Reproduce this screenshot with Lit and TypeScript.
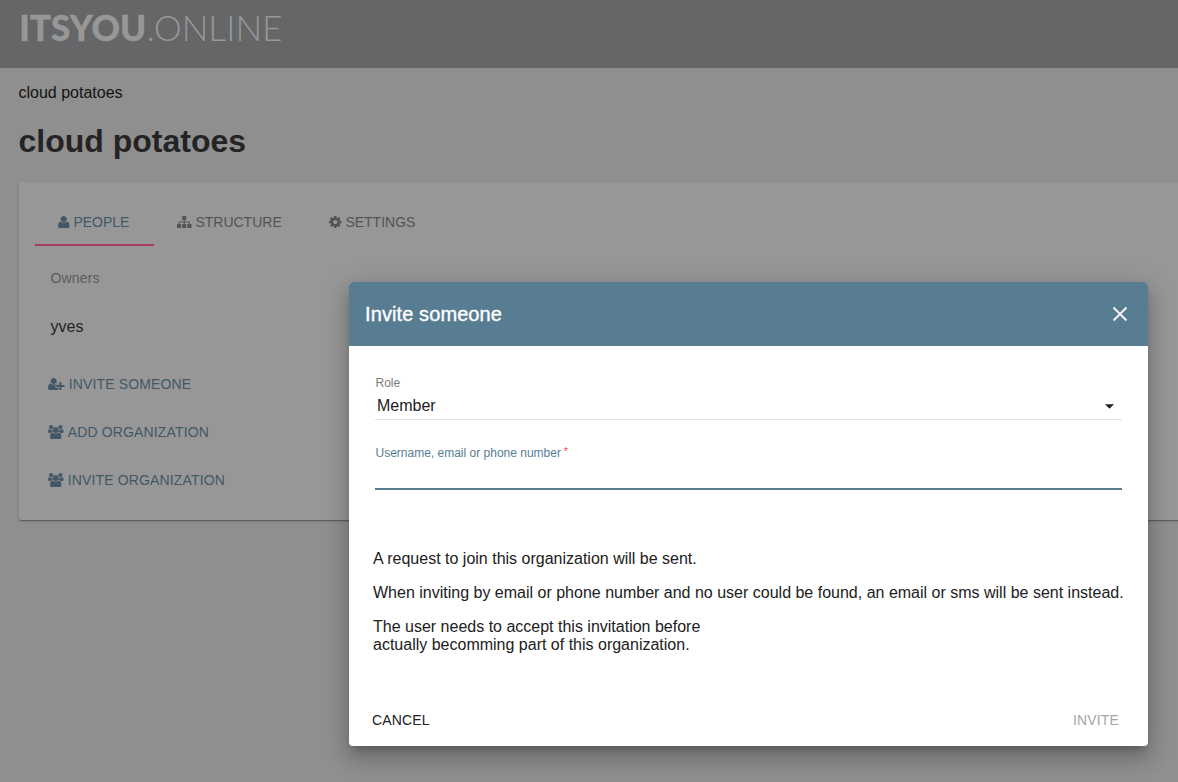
import { LitElement, html, css, svg } from "lit";
import { customElement, property } from "lit/decorators.js";

const USER_HEAD = "q0 159-112.5 271.5t-271.5 112.5-271.5-112.5-112.5-271.5 112.5-271.5 271.5-112.5 271.5 112.5 112.5 271.5z";

const ICONS: Record<string, { x: number; w: number; d: string }> = {
  user: {
    x: 192,
    w: 1408,
    d: "M1600 1405q0 120-73 189.5t-194 69.5h-874q-121 0-194-69.5t-73-189.5q0-53 3.5-103.5t14-109 26.5-108.5 43-97.5 62-81 85.5-53.5 111.5-20q9 0 42 21.5t74.5 48 108 48 133.5 21.5 133.5-21.5 108-48 74.5-48 42-21.5q61 0 111.5 20t85.5 53.5 62 81 43 97.5 26.5 108.5 14 109 3.5 103.5zm-320-893" + USER_HEAD,
  },
  sitemap: {
    x: 0,
    w: 1792,
    d: "M1792 1248v320q0 40-28 68t-68 28h-320q-40 0-68-28t-28-68v-320q0-40 28-68t68-28h96v-192h-512v192h96q40 0 68 28t28 68v320q0 40-28 68t-68 28h-320q-40 0-68-28t-28-68v-320q0-40 28-68t68-28h96v-192h-512v192h96q40 0 68 28t28 68v320q0 40-28 68t-68 28h-320q-40 0-68-28t-28-68v-320q0-40 28-68t68-28h96v-192q0-52 38-90t90-38h512v-192h-96q-40 0-68-28t-28-68v-320q0-40 28-68t68-28h320q40 0 68 28t28 68v320q0 40-28 68t-68 28h-96v192h512q52 0 90 38t38 90v192h96q40 0 68 28t28 68z",
  },
  cog: {
    x: 128,
    w: 1536,
    d: "M1152 896q0-106-75-181t-181-75-181 75-75 181 75 181 181 75 181-75 75-181zm512-109v222q0 12-8 23t-20 13l-185 28q-19 54-39 91 35 50 107 138 10 12 10 25t-9 23q-27 37-99 108t-94 71q-12 0-26-9l-138-108q-44 23-91 38-16 136-29 186-7 28-36 28h-222q-14 0-24.5-8.5t-11.5-21.5l-28-184q-49-16-90-37l-141 107q-10 9-25 9-14 0-25-11-126-114-165-168-7-10-7-23 0-12 8-23 15-21 51-66.5t54-70.5q-27-50-41-99l-183-27q-13-2-21-12.5t-8-23.5v-222q0-12 8-23t19-13l186-28q14-46 39-92-40-57-107-138-10-12-10-24 0-10 9-23 26-36 98.5-107.5t94.5-71.5q13 0 26 10l138 107q44-23 91-38 16-136 29-186 7-28 36-28h222q14 0 24.5 8.5t11.5 21.5l28 184q49 16 90 37l142-107q9-9 24-9 13 0 25 10 129 119 165 170 7 8 7 22 0 12-8 23-15 21-51 66.5t-54 70.5q26 50 41 98l183 28q13 2 21 12.5t8 23.5z",
  },
  userPlus: {
    x: 0,
    w: 2048,
    d: "M704 896q-159 0-271.5-112.5t-112.5-271.5 112.5-271.5 271.5-112.5 271.5 112.5 112.5 271.5-112.5 271.5-271.5 112.5zm960 128h352q13 0 22.5 9.5t9.5 22.5v192q0 13-9.5 22.5t-22.5 9.5h-352v352q0 13-9.5 22.5t-22.5 9.5h-192q-13 0-22.5-9.5t-9.5-22.5v-352h-352q-13 0-22.5-9.5t-9.5-22.5v-192q0-13 9.5-22.5t22.5-9.5h352v-352q0-13 9.5-22.5t22.5-9.5h192q13 0 22.5 9.5t9.5 22.5v352zm-736 224q0 52 38 90t90 38h256v238q-68 50-171 50h-874q-121 0-194-69t-73-190q0-53 3.5-103.5t14-109 26.5-108.5 43-97.5 62-81 85.5-53.5 111.5-20q19 0 39 17 79 61 154.5 91.5t164.5 30.5 164.5-30.5 154.5-91.5q20-17 39-17 132 0 217 96h-223q-52 0-90 38t-38 90v192z",
  },
  users: {
    x: 0,
    w: 1920,
    d: "M593 896q-162 5-265 128h-134q-82 0-138-40.5t-56-118.5q0-353 124-353 6 0 43.5 21t97.5 42.5 119 21.5q67 0 133-23-5 37-5 66 0 139 81 256zm1071 637q0 120-73 189.5t-194 69.5h-874q-121 0-194-69.5t-73-189.5q0-53 3.5-103.5t14-109 26.5-108.5 43-97.5 62-81 85.5-53.5 111.5-20q10 0 43 21.5t73 48 107 48 135 21.5 135-21.5 107-48 73-48 43-21.5q61 0 111.5 20t85.5 53.5 62 81 43 97.5 26.5 108.5 14 109 3.5 103.5zm-1024-1277q0 106-75 181t-181 75-181-75-75-181 75-181 181-75 181 75 75 181zm704 384" + USER_HEAD + "m576 225q0 78-56 118.5t-138 40.5h-134q-103-123-265-128 81-117 81-256 0-29-5-66 66 23 133 23 59 0 119-21.5t97.5-42.5 43.5-21q124 0 124 353zm-128-609q0 106-75 181t-181 75-181-75-75-181 75-181 181-75 181 75 75 181z",
  },
};

@customElement("fa-icon")
class FaIcon extends LitElement {
  @property() name = "user";
  static styles = css`
    :host { display: inline-flex; flex: none; }
    .glyph { display: block; height: 14px; fill: currentColor; }
  `;
  render() {
    const i = ICONS[this.name];
    return html`<svg class="glyph" width=${i.w / 128 + 0.5} viewBox="${i.x} 0 ${i.w} 1792" preserveAspectRatio="none">${svg`<path d=${i.d}></path>`}</svg>`;
  }
}

@customElement("invite-dialog")
class InviteDialog extends LitElement {
  static styles = css`
    :host {
      display: flex;
      flex-direction: column;
      box-sizing: border-box;
      width: 799px;
      height: 464px;
      background: #fff;
      border-radius: 4px;
      overflow: hidden;
      color: #212121;
      box-shadow: 0 7px 8px -4px rgba(0, 0, 0, 0.2), 0 13px 19px 2px rgba(0, 0, 0, 0.14), 0 5px 24px 4px rgba(0, 0, 0, 0.12);
    }
    .bar {
      display: flex;
      align-items: center;
      justify-content: space-between;
      height: 64px;
      padding: 0 20px 0 16px;
      background: #587d93;
      color: #fff;
      flex: none;
    }
    .title { margin: 0; font-size: 20px; font-weight: 400; letter-spacing: 0.1px; -webkit-text-stroke: 0.35px #fff; }
    .close { display: block; width: 16px; height: 16px; }
    .form { display: flex; flex-direction: column; padding: 29px 26px 0; }
    .label { font-size: 12px; line-height: 16px; color: #7c7c7c; padding-left: 0.5px; }
    .select {
      display: flex;
      align-items: center;
      justify-content: space-between;
      box-sizing: border-box;
      height: 29px;
      padding: 2px 8px 0 2px;
      border-bottom: 1px solid #e1e1e1;
      font-size: 16px;
    }
    .arrow { width: 9px; height: 5px; }
    .name { color: #587d93; margin-top: 25px; height: 16px; }
    .star { color: #f44336; font-size: 10px; vertical-align: 2px; line-height: 1; margin-left: 3px; }
    .input { height: 27px; border-bottom: 2px solid #587d93; }
    .copy { padding: 60px 24px 0; font-size: 16px; line-height: 18px; }
    .copy p { margin: 0 0 16px; white-space: nowrap; }
    .actions {
      display: flex;
      justify-content: space-between;
      padding: 0 29px 18px 23px;
      margin-top: auto;
      font-size: 14px;
      line-height: 16px;
      letter-spacing: 0.14px;
    }
    .off { color: #a6a6a6; }
  `;
  render() {
    return html`
      <div class="bar">
        <h2 class="title">Invite someone</h2>
        <svg class="close" viewBox="0 0 16 16"><path d="M1.5 1.5 14.5 14.5M14.5 1.5 1.5 14.5" stroke="#f0f3f5" stroke-width="2" fill="none"></path></svg>
      </div>
      <div class="form">
        <div class="label">Role</div>
        <div class="select"><span>Member</span><svg class="arrow" viewBox="0 0 9 5"><path d="M0 0.3H9L4.5 4.8Z" fill="#212121"></path></svg></div>
        <div class="label name">Username, email or phone number<span class="star">*</span></div>
        <div class="input"></div>
      </div>
      <div class="copy">
        <p>A request to join this organization will be sent.</p>
        <p>When inviting by email or phone number and no user could be found, an email or sms will be sent instead.</p>
        <p>The user needs to accept this invitation before<br />actually becomming part of this organization.</p>
      </div>
      <div class="actions"><span>CANCEL</span><span class="off">INVITE</span></div>
    `;
  }
}

@customElement("app-root")
class AppRoot extends LitElement {
  static styles = css`
    :host {
      display: block;
      position: relative;
      width: 1178px;
      height: 782px;
      overflow: hidden;
      background: #8f8f8f;
      font-family: "Liberation Sans", Arial, sans-serif;
      color: #131313;
    }
    .header { height: 68px; background: #656668; }
    .logo { display: block; width: 300px; height: 68px; font-family: Lato, sans-serif; fill: #979797; }
    .heavy { font-size: 36px; font-weight: 900; stroke: #979797; stroke-width: 0.4px; }
    .thin { font-size: 36px; font-weight: 300; }
    .page { padding: 16px 0 0 18.5px; }
    .crumb { font-size: 16px; line-height: 18px; }
    h1 { margin: 21px 0 0; font-size: 32px; line-height: 37px; letter-spacing: 0; color: #242424; }
    .card {
      box-sizing: border-box;
      width: 1180px;
      height: 338px;
      margin: 22px 0 0 0.5px;
      padding: 16px;
      background: #979797;
      border-radius: 2px;
      box-shadow: 0 1px 3px 0 rgba(0, 0, 0, 0.2), 0 1px 1px 0 rgba(0, 0, 0, 0.14), 0 2px 1px -1px rgba(0, 0, 0, 0.12);
    }
    .tabs { display: flex; height: 48px; font-size: 14px; color: #535353; }
    .tab { display: flex; box-sizing: border-box; align-items: center; gap: 3.5px; padding: 0 24px 0 23.4px; height: 48px; }
    .active { width: 119px; color: #425866; border-bottom: 2px solid #a63a60; padding-top: 2px; }
    .structure { width: 152px; }
    .label { margin: 23px 0 0 15.5px; font-size: 14px; line-height: 18px; letter-spacing: 0.14px; color: #5b5b5b; }
    .person { margin: 30px 0 0 15.5px; font-size: 16px; line-height: 19px; color: #242424; }
    .links { display: flex; flex-direction: column; margin: 24px 0 0 13.3px; font-size: 14px; letter-spacing: 0.14px; color: #425866; }
    .link { display: flex; align-items: center; gap: 4px; height: 48px; }
    .dialog { position: absolute; left: 349px; top: 282px; }
  `;
  render() {
    return html`
      <header class="header">
        <svg class="logo" viewBox="0 0 300 68">
          <text class="heavy" x="19.2" y="41" textLength="127" lengthAdjust="spacingAndGlyphs">ITSYOU</text>
          <text class="thin" x="146.5" y="41" textLength="136" lengthAdjust="spacingAndGlyphs">.ONLINE</text>
        </svg>
      </header>
      <main class="page">
        <div class="crumb">cloud potatoes</div>
        <h1>cloud potatoes</h1>
        <section class="card">
          <nav class="tabs">
            <div class="tab active"><fa-icon name="user"></fa-icon>PEOPLE</div>
            <div class="tab structure"><fa-icon name="sitemap"></fa-icon>STRUCTURE</div>
            <div class="tab"><fa-icon name="cog"></fa-icon>SETTINGS</div>
          </nav>
          <div class="label">Owners</div>
          <div class="person">yves</div>
          <div class="links">
            <div class="link"><fa-icon name="userPlus"></fa-icon>INVITE SOMEONE</div>
            <div class="link"><fa-icon name="users"></fa-icon>ADD ORGANIZATION</div>
            <div class="link"><fa-icon name="users"></fa-icon>INVITE ORGANIZATION</div>
          </div>
        </section>
      </main>
      <invite-dialog class="dialog"></invite-dialog>
    `;
  }
}
